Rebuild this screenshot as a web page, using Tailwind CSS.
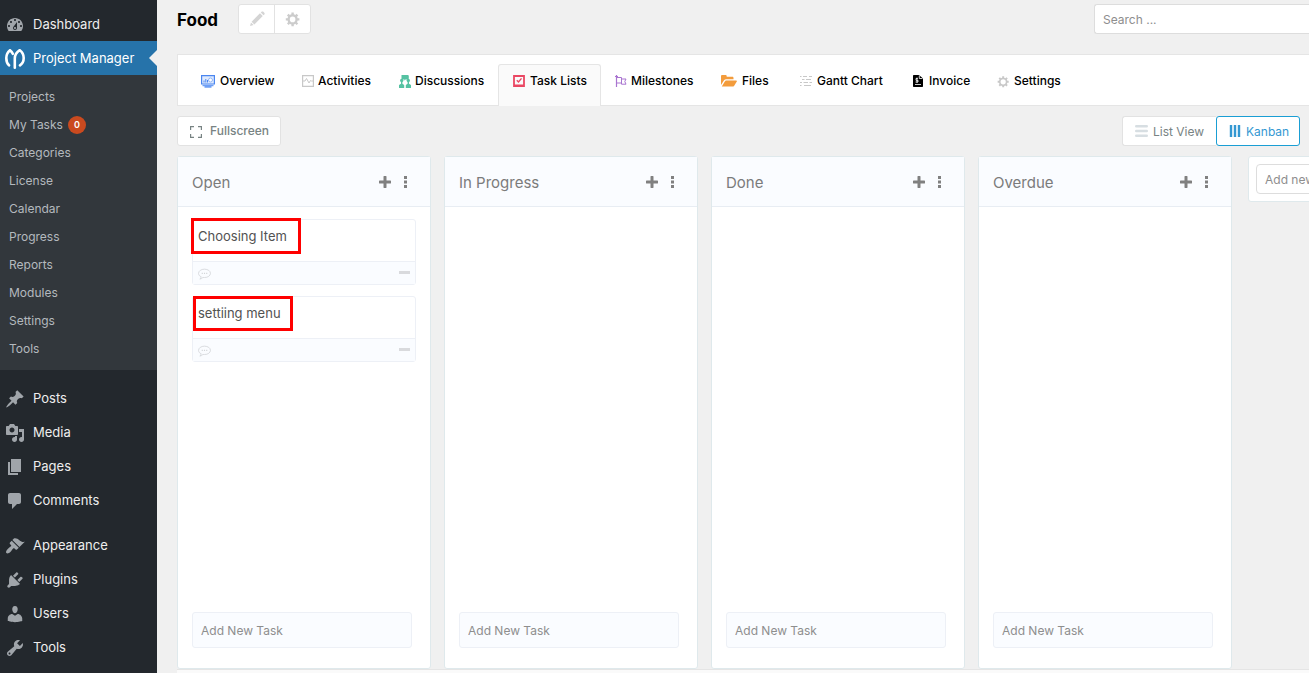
<!DOCTYPE html>
<html lang="en">
<head>
<meta charset="utf-8">
<meta name="viewport" content="width=device-width, initial-scale=1">
<title>Food – Task Lists</title>
<script src="https://cdn.jsdelivr.net/npm/@tailwindcss/browser@4"></script>
</head>
<body class="flex h-screen overflow-hidden bg-[#f0f0f0] font-['Inter',sans-serif] text-[13px] text-black">

<aside class="w-[157px] shrink-0 bg-[#23282d] pt-[7px] text-[13px] text-[#eeeeee]">
  <nav aria-label="Admin menu">
    <a href="#" class="flex h-[34px] items-center gap-2 pt-[2px] pl-[5px]"><svg class="size-5 fill-[#a0a5aa]" viewBox="0 0 20 20"><path d="M3.76 16h12.48c1.1-1.37 1.76-3.11 1.76-5 0-4.42-3.58-8-8-8s-8 3.58-8 8c0 1.89.66 3.63 1.76 5zM10 4c.55 0 1 .45 1 1s-.45 1-1 1-1-.45-1-1 .45-1 1-1zM6 6c.55 0 1 .45 1 1s-.45 1-1 1-1-.45-1-1 .45-1 1-1zm8 0c.55 0 1 .45 1 1s-.45 1-1 1-1-.45-1-1 .45-1 1-1zm-5.37 5.55L12 7v6c0 1.1-.9 2-2 2s-2-.9-2-2c0-.57.24-1.08.63-1.45zM4 10c.55 0 1 .45 1 1s-.45 1-1 1-1-.45-1-1 .45-1 1-1zm12 0c.55 0 1 .45 1 1s-.45 1-1 1-1-.45-1-1 .45-1 1-1zm-5 3c0-.55-.45-1-1-1s-1 .45-1 1 .45 1 1 1 1-.45 1-1z"/></svg>Dashboard</a>
    <a href="#" class="relative flex h-[34px] items-center gap-2 bg-[#2673aa] pt-[2px] pl-[5px] text-white"><svg class="size-5" viewBox="0 0 20 20" fill="none" stroke="#fff" stroke-width="2.6" stroke-linecap="round" stroke-linejoin="round"><path d="M4 16.300C2 14.500 1.300 12 1.300 9 1.300 5.500 2.800 3 5 1.200 6.300 2.200 7.200 3.400 7.800 4.800"/><path d="M9.800 18.700V9.500C9.800 5.800 12 3 14.800 1.200 17.300 3 18.700 5.500 18.700 9c0 3.200-1.200 5.700-3.700 7.300"/></svg>Project Manager<span class="absolute top-1/2 right-0 size-0 -translate-y-1/2 border-8 border-transparent border-r-[#f0f0f0]"></span></a>
    <div class="flex flex-col bg-[#32373c] pt-2 pb-[7px] text-[12px] text-[#b4b9be]">
      <a href="#" class="flex h-7 items-center pl-[9px]">Projects</a>
      <a href="#" class="flex h-7 items-center gap-[5px] pl-[9px]">My Tasks <span class="flex size-[18px] items-center justify-center rounded-full bg-[#ca4a1f] text-[9px] font-semibold text-white">0</span></a>
      <a href="#" class="flex h-7 items-center pl-[9px]">Categories</a>
      <a href="#" class="flex h-7 items-center pl-[9px]">License</a>
      <a href="#" class="flex h-7 items-center pl-[9px]">Calendar</a>
      <a href="#" class="flex h-7 items-center pl-[9px]">Progress</a>
      <a href="#" class="flex h-7 items-center pl-[9px]">Reports</a>
      <a href="#" class="flex h-7 items-center pl-[9px]">Modules</a>
      <a href="#" class="flex h-7 items-center pl-[9px]">Settings</a>
      <a href="#" class="flex h-7 items-center pl-[9px]">Tools</a>
    </div>
    <div class="mt-[11px]">
      <a href="#" class="flex h-[34px] items-center gap-2 pt-[2px] pl-[5px]"><svg class="size-5 fill-[#a0a5aa]" viewBox="0 0 20 20"><path d="M10.440 3.020l1.820-1.820 6.360 6.350-1.830 1.820c-1.050-.68-2.480-.57-3.410.36l-.75.75c-.92.93-1.040 2.350-.35 3.410l-1.830 1.820-2.410-2.410-2.800 2.790c-.42.42-3.380 2.710-3.800 2.290s1.860-3.390 2.280-3.810l2.790-2.790L4.100 9.360l1.830-1.820c1.050.69 2.480.57 3.400-.36l.75-.75c.93-.92 1.050-2.350.36-3.410z"/></svg>Posts</a>
      <a href="#" class="flex h-[34px] items-center gap-2 pt-[2px] pl-[5px]"><svg class="size-5 fill-[#a0a5aa]" viewBox="0 0 20 20"><path d="M13 11V4c0-.55-.45-1-1-1h-1.670L9 1H5L3.670 3H2c-.55 0-1 .45-1 1v7c0 .55.45 1 1 1h10c.55 0 1-.45 1-1zM7 4.500c1.380 0 2.500 1.120 2.500 2.500S8.380 9.500 7 9.500 4.500 8.380 4.500 7 5.620 4.500 7 4.500zM14 6h5v10.500c0 1.380-1.120 2.500-2.500 2.500S14 17.880 14 16.500s1.120-2.500 2.500-2.500c.17 0 .34.02.5.05V9h-3V6zm-4 8.050V13h2v3.500c0 1.380-1.120 2.500-2.500 2.500S7 17.880 7 16.500 8.120 14 9.500 14c.17 0 .34.02.5.05z"/></svg>Media</a>
      <a href="#" class="flex h-[34px] items-center gap-2 pt-[2px] pl-[5px]"><svg class="size-5 fill-[#a0a5aa]" viewBox="0 0 20 20"><path d="M6 15V2h10v13H6zm-1 1h8v2H3V5h2v11z"/></svg>Pages</a>
      <a href="#" class="flex h-[34px] items-center gap-2 pt-[2px] pl-[5px]"><svg class="size-5 fill-[#a0a5aa]" viewBox="0 0 20 20"><path d="M5 2h9c1.100 0 2 .9 2 2v7c0 1.100-.9 2-2 2h-2l-5 5v-5H5c-1.100 0-2-.9-2-2V4c0-1.100.9-2 2-2z"/></svg>Comments</a>
    </div>
    <div class="mt-[11px]">
      <a href="#" class="flex h-[34px] items-center gap-2 pt-[2px] pl-[5px]"><svg class="size-5 fill-[#a0a5aa]" viewBox="0 0 20 20"><path d="M14.480 11.060L7.410 3.990l1.500-1.500c.5-.56 2.300-.47 3.510.32 1.210.8 1.430 1.280 2.910 2.100 1.180.64 2.450 1.260 4.450.85zm-.71.71L6.700 4.700 4.930 6.470c-.39.39-.39 1.020 0 1.410l1.060 1.060c.39.39.39 1.030 0 1.420-.6.6-1.430 1.110-2.210 1.690-.35.26-.7.53-1.010.84C1.430 14.230.4 16.080 1.400 17.070c.99 1 2.840-.03 4.180-1.360.31-.31.58-.66.85-1.020.57-.78 1.080-1.610 1.690-2.210.39-.39 1.020-.39 1.410 0l1.060 1.060c.39.39 1.020.39 1.410 0z"/></svg>Appearance</a>
      <a href="#" class="flex h-[34px] items-center gap-2 pt-[2px] pl-[5px]"><svg class="size-5 fill-[#a0a5aa]" viewBox="0 0 20 20"><path d="M13.110 4.360L9.870 7.600 8 5.730l3.240-3.240c.35-.34 1.050-.2 1.560.32.52.51.66 1.210.31 1.550zm-8 1.770l.91-1.120 9.010 9.010-1.190.84c-.71.71-2.630 1.160-3.820 1.160H6.140L4.900 17.260c-.59.59-1.540.59-2.120 0-.59-.58-.59-1.530 0-2.120l1.240-1.240v-3.880c0-1.130.4-3.190 1.090-3.890zm7.260 3.970l3.240-3.240c.34-.35 1.040-.21 1.550.31.52.51.66 1.210.31 1.550l-3.240 3.250z"/></svg>Plugins</a>
      <a href="#" class="flex h-[34px] items-center gap-2 pt-[2px] pl-[5px]"><svg class="size-5 fill-[#a0a5aa]" viewBox="0 0 20 20"><path d="M10 9.250c-2.270 0-2.730-3.440-2.730-3.440C7 4.020 7.820 2 9.970 2c2.160 0 2.980 2.020 2.710 3.810 0 0-.41 3.440-2.680 3.440zm0 2.570L12.720 10c2.390 0 4.520 2.330 4.520 4.530v2.490s-3.650 1.130-7.240 1.130c-3.650 0-7.240-1.130-7.240-1.130v-2.490c0-2.250 1.940-4.480 4.470-4.480z"/></svg>Users</a>
      <a href="#" class="flex h-[34px] items-center gap-2 pt-[2px] pl-[5px]"><svg class="size-5 fill-[#a0a5aa]" viewBox="0 0 20 20"><path d="M16.680 9.770c-1.340 1.340-3.300 1.670-4.950.99l-5.410 6.520c-.99.99-2.590.99-3.580 0s-.99-2.590 0-3.570l6.520-5.420c-.68-1.650-.35-3.610.99-4.950 1.280-1.280 3.120-1.620 4.720-1.060l-2.890 2.890 2.820 2.820 2.860-2.870c.53 1.580.18 3.390-1.080 4.650zM3.810 16.210c.4.39 1.040.39 1.430 0 .4-.4.4-1.040 0-1.430-.39-.4-1.030-.4-1.430 0-.39.39-.39 1.030 0 1.430z"/></svg>Tools</a>
    </div>
  </nav>
</aside>

<main class="flex min-w-0 flex-1 flex-col pt-1 pl-5">
  <header class="flex h-[30px] items-center">
    <h1 class="w-[61px] pt-[3px] text-[17px] font-bold">Food</h1>
    <div class="flex h-[30px] rounded-[3px] border border-[#e2e2e2] bg-white">
      <button aria-label="Edit project" class="flex w-9 items-center justify-center border-r border-[#e2e2e2]"><svg class="size-[18px] fill-[#d4d4d4]" viewBox="0 0 20 20"><path d="M13.300 3.700l3.100 3.100-9.300 9.300-3.100-3.100zM3.300 13.800l2.900 2.900-3.900 1.100zM14.200 2.800l.8-.8c.6-.6 1.500-.6 2.100 0l1 1c.6.6.6 1.500 0 2.100l-.8.8z"/></svg></button>
      <button aria-label="Project settings" class="flex w-[35px] items-center justify-center"><svg class="size-4 fill-[#cccccc]" viewBox="0 0 20 20" fill-rule="evenodd"><path d="M18 12h-2.180c-.17.7-.44 1.350-.81 1.930l1.540 1.540-2.100 2.100-1.540-1.540c-.58.36-1.230.63-1.910.79V19H8v-2.180c-.68-.16-1.330-.43-1.910-.79l-1.540 1.540-2.120-2.120 1.540-1.540c-.36-.58-.63-1.230-.79-1.910H1V9.030h2.170c.16-.7.44-1.350.8-1.940L2.430 5.550l2.100-2.100 1.540 1.540c.58-.37 1.240-.64 1.930-.81V2h3v2.180c.68.16 1.330.43 1.910.79l1.540-1.540 2.120 2.120-1.540 1.540c.36.59.64 1.240.8 1.940H18V12zM9.500 14a3.500 3.500 0 1 0 0-7 3.500 3.500 0 0 0 0 7z"/></svg></button>
    </div>
    <input type="search" aria-label="Search" placeholder="Search ..." class="ml-auto h-[30px] w-[215px] rounded-l-[3px] border border-r-0 border-[#dddddd] bg-white px-2 text-[12px] placeholder:text-[#8e8e8e]">
  </header>

  <nav aria-label="Project sections" class="mt-5 flex h-[52px] items-start border border-r-0 border-[#e5e5e5] bg-white pt-[9px] pl-[9px] text-[12px] font-medium">
    <a href="#" class="flex h-[34px] w-[101px] items-center gap-[5px] pl-[14px]"><svg class="h-[13px] w-[14px]" viewBox="0 0 14 13" fill="none" stroke="#4a86f0"><path d="M.6.600h12.800v8.400H.6z" stroke-width="1.200" fill="#dfeafd"/><path d="M3 7.500V5.500M4.800 7.500V4M6.500 7.500V5" stroke-width="1"/><circle cx="9.500" cy="5" r="2" stroke="#8fb4f7" fill="#fff"/><path d="M1.500 10.500h11M3.500 12h7" stroke="#6fa0f5" stroke-width="1.500"/></svg>Overview</a>
    <a href="#" class="flex h-[34px] w-[97px] items-center gap-1 pl-[14px]"><svg class="size-3" viewBox="0 0 12 12" fill="none" stroke="#c8c8c8"><path d="M.6.600h10.800v10.800H.6z" stroke-width="1.200"/><path d="M1 6h2l1.500-2.500L7 8l1.500-2.500L9.500 6H11"/></svg>Activities</a>
    <a href="#" class="flex h-[34px] w-[113px] items-center gap-1 pl-[14px]"><svg class="h-[13px] w-3 fill-[#55c2a2]" viewBox="0 0 12 13"><path d="M2.500 0h6c.8 0 1.300.5 1.300 1.200v2c0 .7-.5 1.200-1.300 1.200H6.400L5.500 5.700V4.400h-3z"/><circle cx="2.700" cy="5.500" r="1.700"/><circle cx="9.300" cy="5.500" r="1.700"/><path d="M2 7h1.400v1.800L5.200 10v3H0v-3l2-1.200zM8.600 7H10v1.800l2 1.200v3H6.800v-3l1.800-1.200z"/></svg>Discussions</a>
    <a href="#" aria-current="page" class="flex h-[42px] w-[103px] items-start gap-[5px] rounded-t-[3px] border border-b-0 border-[#e5e5e5] bg-[#fafafa] pt-2 pl-[14px]"><svg class="mt-[2px] size-3" viewBox="0 0 12 12" fill="none" stroke="#ea4763"><path d="M1 1h10v10H1z" stroke-width="1.800"/><path d="M1 10.500h10" stroke-width="2"/><path d="M3.800 5.200l1.700 1.700 3-3.500" stroke-width="1.400"/></svg><span class="h-4 leading-4">Task Lists</span></a>
    <a href="#" class="flex h-[34px] w-[106px] items-center gap-1 pl-[14px]"><svg class="size-3" viewBox="0 0 12 12" fill="none" stroke="#a974d0"><path d="M1.500 0v12M0 1.500h3" stroke-width="1.200"/><path d="M2 2.500h4.500v1.500h4.500L9.800 6.500l1.200 2.700H6.500V8H2M6.500 4v4"/></svg>Milestones</a>
    <a href="#" class="flex h-[34px] w-[81px] items-center gap-[5px] pl-[14px]"><svg class="h-3 w-4 fill-[#f39c3c]" viewBox="0 0 16 12"><path d="M0 10V1.200C0 .5.500 0 1.200 0h3.300c.7 0 1.200.5 1.200 1.200v.5h5.600c.7 0 1.200.5 1.200 1.200v1.400H5.200c-.9 0-1.700.4-2.300 1.100z"/><path d="M.8 11.500l3-5c.4-.7.8-1.100 1.700-1.100H15c.9 0 1.200.5.8 1.100l-2.600 4.200c-.4.600-1 .9-1.700.9z"/></svg>Files</a>
    <a href="#" class="flex h-[34px] w-[113px] items-center gap-[5px] pl-[12px]"><svg class="size-3" viewBox="0 0 12 12" stroke="#c8c8c8" stroke-width="1.200"><path d="M0 1.500h1.500M3 1.500h4M9 1.500h3M2 4.500h2.500M6 4.500h5M0 7.500h2M3.500 7.500H8M9.500 7.500H12M0 10.500h1.500M4 10.500h7"/></svg>Gantt Chart</a>
    <a href="#" class="flex h-[34px] w-[84px] items-center gap-[6px] pl-[12px]"><svg class="h-3 w-[10px]" viewBox="0 0 10 12"><path d="M1 0h5l4 3.500V11c0 .6-.4 1-1 1H1c-.6 0-1-.4-1-1V1c0-.6.400-1 1-1z"/><path d="M6.300.500v3H9.500M4.800 3.500H3v1.800h2V7H2.500M4 2.500v5.500M2 9.500h6" fill="none" stroke="#fff" stroke-width=".8"/></svg>Invoice</a>
    <a href="#" class="flex h-[34px] items-center gap-1 pl-[12px]"><svg class="size-[13px] fill-[#c8c8c8]" viewBox="0 0 20 20" fill-rule="evenodd"><path d="M18 12h-2.180c-.17.7-.44 1.350-.81 1.930l1.540 1.540-2.100 2.100-1.540-1.540c-.58.36-1.230.63-1.910.79V19H8v-2.180c-.68-.16-1.330-.43-1.910-.79l-1.540 1.540-2.120-2.120 1.540-1.540c-.36-.58-.63-1.230-.79-1.910H1V9.030h2.170c.16-.7.44-1.350.8-1.940L2.430 5.550l2.100-2.100 1.540 1.540c.58-.37 1.240-.64 1.930-.81V2h3v2.180c.68.16 1.330.43 1.910.79l1.540-1.540 2.120 2.120-1.540 1.540c.36.59.64 1.240.8 1.940H18V12zM9.500 14.500a4 4 0 1 0 0-8 4 4 0 0 0 0 8z"/></svg>Settings</a>
  </nav>

  <div class="mt-[10px] flex h-[30px] justify-between pr-[9px] text-[12px] text-[#788383]">
    <button class="flex w-[104px] items-center gap-2 rounded-[3px] border border-[#e2e2e2] bg-white pl-3 font-medium"><svg class="mt-[2px] size-3" viewBox="0 0 12 12" fill="none" stroke="#788383" stroke-width="1.200"><path d="M.6 4V.600H4M8 .600h3.400V4M11.400 8v3.400H8M4 11.400H.6V8"/></svg>Fullscreen</button>
    <div class="flex">
      <button class="flex w-[94px] items-center gap-[5px] rounded-l-[3px] border border-r-0 border-[#e2e2e2] bg-white pt-px pl-3"><svg class="mb-[2px] h-3 w-[13px]" viewBox="0 0 13 12" stroke="#d7dee2" stroke-width="2.400" stroke-linecap="round"><path d="M1.200 1.200h10.600M1.200 6h10.600M1.200 10.800h10.600"/></svg>List View</button>
      <button aria-pressed="true" class="flex w-[84px] items-center gap-[5px] rounded-[3px] border border-[#1a9ed4] bg-white pt-px pl-3 text-[#3498d2]"><svg class="mb-[2px] h-3 w-3" viewBox="0 0 12 12" stroke="#3498d2" stroke-width="2.400"><path d="M2 0v12M6 0v12M10 0v12"/></svg>Kanban</button>
    </div>
  </div>

  <div class="mt-[10px] flex min-h-0 flex-1 gap-[13px] overflow-hidden">
    <section class="flex w-[254px] shrink-0 flex-col rounded-[3px] border border-[#dfe9ec] bg-white">
      <div class="flex h-[50px] shrink-0 items-center border-b border-[#e8edf3] bg-[#fafcff] pl-[14px] text-[15px] text-[#7b7b7b]">
        <h2 class="flex-1 pt-[3px]">Open</h2>
        <button aria-label="Add task to Open" class="mr-[13px]"><svg class="size-3" viewBox="0 0 12 12" stroke="#808080" stroke-width="3"><path d="M6 1v10M1 6h10" stroke-linecap="round"/></svg></button>
        <button aria-label="Open list menu" class="mr-[22px]"><svg class="h-3 w-1 fill-[#808080]" viewBox="0 0 4 12"><path d="M0 0h3v3H0zM0 4.500h3v3H0zM0 9h3v3H0z"/></svg></button>
      </div>
      <div class="flex flex-1 flex-col gap-[11px] px-[14px] pt-3">
        <article class="relative h-[66px] rounded-[3px] border border-[#edf0f6] text-[#525252]">
          <h3 class="flex h-[42px] items-start border-b border-[#edf0f6] pt-[6px] pl-[5px] text-[13px] leading-5">Choosing Item</h3>
          <span class="absolute -top-[2px] -left-[2px] h-9 w-[110px] border-[3px] border-[#ff0000]"></span>
          <div class="flex h-[22px] items-center justify-between bg-[#fafcff] pt-px pr-[5px] pl-[5px]"><svg class="h-3 w-[13px]" viewBox="0 0 14 12" fill="none" stroke="#d3d5d8" stroke-width=".9"><path d="M3.500 9C1.600 8.300.600 7 .600 5.300.600 2.700 3.400.8 7 .8s6.400 1.900 6.400 4.500S10.600 9.800 7 9.800c-.6 0-1.200 0-1.700-.1-.8.900-1.900 1.600-3.300 1.800.8-.7 1.300-1.500 1.500-2.500z"/><path d="M4 5.300h1.200M6.400 5.300h1.200M8.800 5.300H10" stroke-width="1.300"/></svg><span class="mb-[2px] h-[3px] w-[11px] bg-[#d9dadd]"></span></div>
        </article>
        <article class="relative h-[66px] rounded-[3px] border border-[#edf0f6] text-[#525252]">
          <h3 class="flex h-[42px] items-start border-b border-[#edf0f6] pt-[6px] pl-[5px] text-[13px] leading-5">settiing menu</h3>
          <span class="absolute -top-px left-0 h-[35px] w-[100px] border-[3px] border-[#ff0000]"></span>
          <div class="flex h-[22px] items-center justify-between bg-[#fafcff] pt-px pr-[5px] pl-[5px]"><svg class="h-3 w-[13px]" viewBox="0 0 14 12" fill="none" stroke="#d3d5d8" stroke-width=".9"><path d="M3.500 9C1.600 8.300.600 7 .600 5.300.600 2.700 3.400.8 7 .8s6.400 1.900 6.400 4.500S10.600 9.800 7 9.800c-.6 0-1.200 0-1.700-.1-.8.900-1.900 1.600-3.300 1.800.8-.7 1.300-1.500 1.500-2.500z"/><path d="M4 5.300h1.200M6.400 5.300h1.200M8.800 5.300H10" stroke-width="1.300"/></svg><span class="mb-[2px] h-[3px] w-[11px] bg-[#d9dadd]"></span></div>
        </article>
      </div>
      <input aria-label="Add new task to Open" placeholder="Add New Task" class="mr-[18px] mb-5 ml-[14px] h-9 rounded-[3px] border border-[#edf0f6] bg-[#fafcff] px-2 text-[12px] placeholder:text-[#8e8e8e]">
    </section>

    <section class="flex w-[254px] shrink-0 flex-col rounded-[3px] border border-[#dfe9ec] bg-white">
      <div class="flex h-[50px] shrink-0 items-center border-b border-[#e8edf3] bg-[#fafcff] pl-[14px] text-[15px] text-[#7b7b7b]">
        <h2 class="flex-1 pt-[3px]">In Progress</h2>
        <button aria-label="Add task to In Progress" class="mr-[13px]"><svg class="size-3" viewBox="0 0 12 12" stroke="#808080" stroke-width="3"><path d="M6 1v10M1 6h10" stroke-linecap="round"/></svg></button>
        <button aria-label="In Progress list menu" class="mr-[22px]"><svg class="h-3 w-1 fill-[#808080]" viewBox="0 0 4 12"><path d="M0 0h3v3H0zM0 4.500h3v3H0zM0 9h3v3H0z"/></svg></button>
      </div>
      <div class="flex-1"></div>
      <input aria-label="Add new task to In Progress" placeholder="Add New Task" class="mr-[18px] mb-5 ml-[14px] h-9 rounded-[3px] border border-[#edf0f6] bg-[#fafcff] px-2 text-[12px] placeholder:text-[#8e8e8e]">
    </section>

    <section class="flex w-[254px] shrink-0 flex-col rounded-[3px] border border-[#dfe9ec] bg-white">
      <div class="flex h-[50px] shrink-0 items-center border-b border-[#e8edf3] bg-[#fafcff] pl-[14px] text-[15px] text-[#7b7b7b]">
        <h2 class="flex-1 pt-[3px]">Done</h2>
        <button aria-label="Add task to Done" class="mr-[13px]"><svg class="size-3" viewBox="0 0 12 12" stroke="#808080" stroke-width="3"><path d="M6 1v10M1 6h10" stroke-linecap="round"/></svg></button>
        <button aria-label="Done list menu" class="mr-[22px]"><svg class="h-3 w-1 fill-[#808080]" viewBox="0 0 4 12"><path d="M0 0h3v3H0zM0 4.500h3v3H0zM0 9h3v3H0z"/></svg></button>
      </div>
      <div class="flex-1"></div>
      <input aria-label="Add new task to Done" placeholder="Add New Task" class="mr-[18px] mb-5 ml-[14px] h-9 rounded-[3px] border border-[#edf0f6] bg-[#fafcff] px-2 text-[12px] placeholder:text-[#8e8e8e]">
    </section>

    <section class="flex w-[254px] shrink-0 flex-col rounded-[3px] border border-[#dfe9ec] bg-white">
      <div class="flex h-[50px] shrink-0 items-center border-b border-[#e8edf3] bg-[#fafcff] pl-[14px] text-[15px] text-[#7b7b7b]">
        <h2 class="flex-1 pt-[3px]">Overdue</h2>
        <button aria-label="Add task to Overdue" class="mr-[13px]"><svg class="size-3" viewBox="0 0 12 12" stroke="#808080" stroke-width="3"><path d="M6 1v10M1 6h10" stroke-linecap="round"/></svg></button>
        <button aria-label="Overdue list menu" class="mr-[22px]"><svg class="h-3 w-1 fill-[#808080]" viewBox="0 0 4 12"><path d="M0 0h3v3H0zM0 4.500h3v3H0zM0 9h3v3H0z"/></svg></button>
      </div>
      <div class="flex-1"></div>
      <input aria-label="Add new task to Overdue" placeholder="Add New Task" class="mr-[18px] mb-5 ml-[14px] h-9 rounded-[3px] border border-[#edf0f6] bg-[#fafcff] px-2 text-[12px] placeholder:text-[#8e8e8e]">
    </section>

    <section class="ml-[3px] h-[46px] w-[254px] shrink-0 rounded-[3px] border border-[#dfe9ec] bg-white p-[7px]">
      <input aria-label="Add new section" placeholder="Add new section" class="h-[30px] w-full rounded-[4px] border border-[#dddddd] bg-white px-2 text-[12px] placeholder:text-[#8e8e8e]">
    </section>
  </div>
  <div class="h-1 shrink-0 border-t border-[#e5e5e5] bg-[#fafafa]"></div>
</main>
</body>
</html>
